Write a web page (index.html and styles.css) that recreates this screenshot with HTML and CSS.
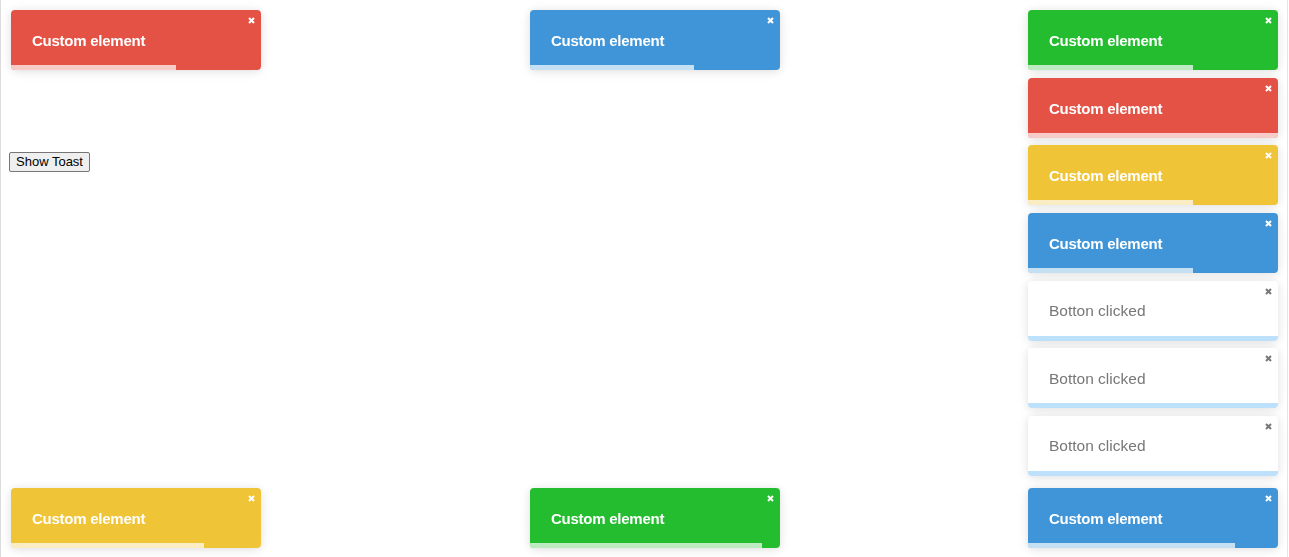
FILE: index.html
```html
<!DOCTYPE html>
<html lang="en">
<head>
<meta charset="utf-8">
<title>Toasts</title>
<link rel="stylesheet" href="styles.css">
</head>
<body>
<div class="frame">
  <button class="show-btn" type="button">Show Toast</button>
</div>

<div class="toasts toasts--top-left">
  <div class="toast toast--red">
    <span class="toast__text">Custom element</span>
    <span class="toast__close"><svg viewBox="0 0 7 7"><path d="M1 1L6 6M6 1L1 6"/></svg></span>
    <span class="toast__bar" style="width:66%"></span>
  </div>
</div>

<div class="toasts toasts--top-center">
  <div class="toast toast--blue">
    <span class="toast__text">Custom element</span>
    <span class="toast__close"><svg viewBox="0 0 7 7"><path d="M1 1L6 6M6 1L1 6"/></svg></span>
    <span class="toast__bar" style="width:65.6%"></span>
  </div>
</div>

<div class="toasts toasts--top-right">
  <div class="toast toast--green">
    <span class="toast__text">Custom element</span>
    <span class="toast__close"><svg viewBox="0 0 7 7"><path d="M1 1L6 6M6 1L1 6"/></svg></span>
    <span class="toast__bar" style="width:66%"></span>
  </div>
  <div class="toast toast--red">
    <span class="toast__text">Custom element</span>
    <span class="toast__close"><svg viewBox="0 0 7 7"><path d="M1 1L6 6M6 1L1 6"/></svg></span>
    <span class="toast__bar" style="width:100%"></span>
  </div>
  <div class="toast toast--yellow">
    <span class="toast__text">Custom element</span>
    <span class="toast__close"><svg viewBox="0 0 7 7"><path d="M1 1L6 6M6 1L1 6"/></svg></span>
    <span class="toast__bar" style="width:66%"></span>
  </div>
  <div class="toast toast--blue">
    <span class="toast__text">Custom element</span>
    <span class="toast__close"><svg viewBox="0 0 7 7"><path d="M1 1L6 6M6 1L1 6"/></svg></span>
    <span class="toast__bar" style="width:66%"></span>
  </div>
  <div class="toast toast--white">
    <span class="toast__text">Botton clicked</span>
    <span class="toast__close"><svg viewBox="0 0 7 7"><path d="M1 1L6 6M6 1L1 6"/></svg></span>
    <span class="toast__bar" style="width:100%"></span>
  </div>
  <div class="toast toast--white">
    <span class="toast__text">Botton clicked</span>
    <span class="toast__close"><svg viewBox="0 0 7 7"><path d="M1 1L6 6M6 1L1 6"/></svg></span>
    <span class="toast__bar" style="width:100%"></span>
  </div>
  <div class="toast toast--white">
    <span class="toast__text">Botton clicked</span>
    <span class="toast__close"><svg viewBox="0 0 7 7"><path d="M1 1L6 6M6 1L1 6"/></svg></span>
    <span class="toast__bar" style="width:100%"></span>
  </div>
</div>

<div class="toasts toasts--bottom-left">
  <div class="toast toast--yellow">
    <span class="toast__text">Custom element</span>
    <span class="toast__close"><svg viewBox="0 0 7 7"><path d="M1 1L6 6M6 1L1 6"/></svg></span>
    <span class="toast__bar" style="width:77.2%"></span>
  </div>
</div>

<div class="toasts toasts--bottom-center">
  <div class="toast toast--green">
    <span class="toast__text">Custom element</span>
    <span class="toast__close"><svg viewBox="0 0 7 7"><path d="M1 1L6 6M6 1L1 6"/></svg></span>
    <span class="toast__bar" style="width:92.8%"></span>
  </div>
</div>

<div class="toasts toasts--bottom-right">
  <div class="toast toast--blue">
    <span class="toast__text">Custom element</span>
    <span class="toast__close"><svg viewBox="0 0 7 7"><path d="M1 1L6 6M6 1L1 6"/></svg></span>
    <span class="toast__bar" style="width:82.8%"></span>
  </div>
</div>
</body>
</html>
```

FILE: styles.css
```css
html, body {
  margin: 0;
  padding: 0;
  background: #ffffff;
}

.frame {
  box-sizing: border-box;
  height: 557px;
  width: 1288px;
  border-left: 1px solid #dcdcdc;
  border-right: 1px solid #e6e6e6;
  padding: 152px 8px 0 8px;
}

.show-btn {
  font-family: "Liberation Sans", Arial, sans-serif;
  font-size: 13px;
  color: #000;
  background: #efefef;
  border: 1px solid #767676;
  border-radius: 2px;
  padding: 1px 6px;
  height: 20px;
  line-height: 16px;
  margin: 0;
}

.toasts {
  position: fixed;
  width: 250px;
  display: flex;
  flex-direction: column;
  gap: 7.67px;
}

.toasts--top-left { top: 10px; left: 11px; }
.toasts--top-center { top: 10px; left: 530px; }
.toasts--top-right { top: 10px; right: 11px; }
.toasts--bottom-left { bottom: 9px; left: 11px; }
.toasts--bottom-center { bottom: 9px; left: 530px; }
.toasts--bottom-right { bottom: 9px; right: 11px; }

.toast {
  position: relative;
  box-sizing: border-box;
  height: 60px;
  border-radius: 4px;
  overflow: hidden;
  display: flex;
  align-items: center;
  padding: 1px 21px 0 21px;
  font-family: "Liberation Sans", Arial, sans-serif;
  box-shadow: 0 1px 10px 0 rgba(0, 0, 0, 0.1), 0 2px 15px 0 rgba(0, 0, 0, 0.05);
}

.toast__text {
  font-size: 15px;
  font-weight: bold;
  letter-spacing: -0.25px;
  color: #ffffff;
}

.toast__close {
  position: absolute;
  top: 7px;
  right: 6px;
  width: 7px;
  height: 7px;
  display: block;
}

.toast__close svg {
  display: block;
  width: 7px;
  height: 7px;
  stroke: #ffffff;
  stroke-width: 2;
  fill: none;
}

.toast__bar {
  position: absolute;
  left: 0;
  bottom: 0;
  height: 5px;
  background: rgba(255, 255, 255, 0.7);
}

.toast--red { background: #e35244; }
.toast--blue { background: #3f95d7; }
.toast--green { background: #24bd2f; }
.toast--yellow { background: #efc436; }

.toast--white { background: #ffffff; }
.toast--white .toast__text {
  font-weight: normal;
  font-size: 15.5px;
  letter-spacing: 0;
  color: #777777;
}
.toast--white .toast__close svg { stroke: #777777; }
.toast--white .toast__bar { background: #bde0fb; }
```
